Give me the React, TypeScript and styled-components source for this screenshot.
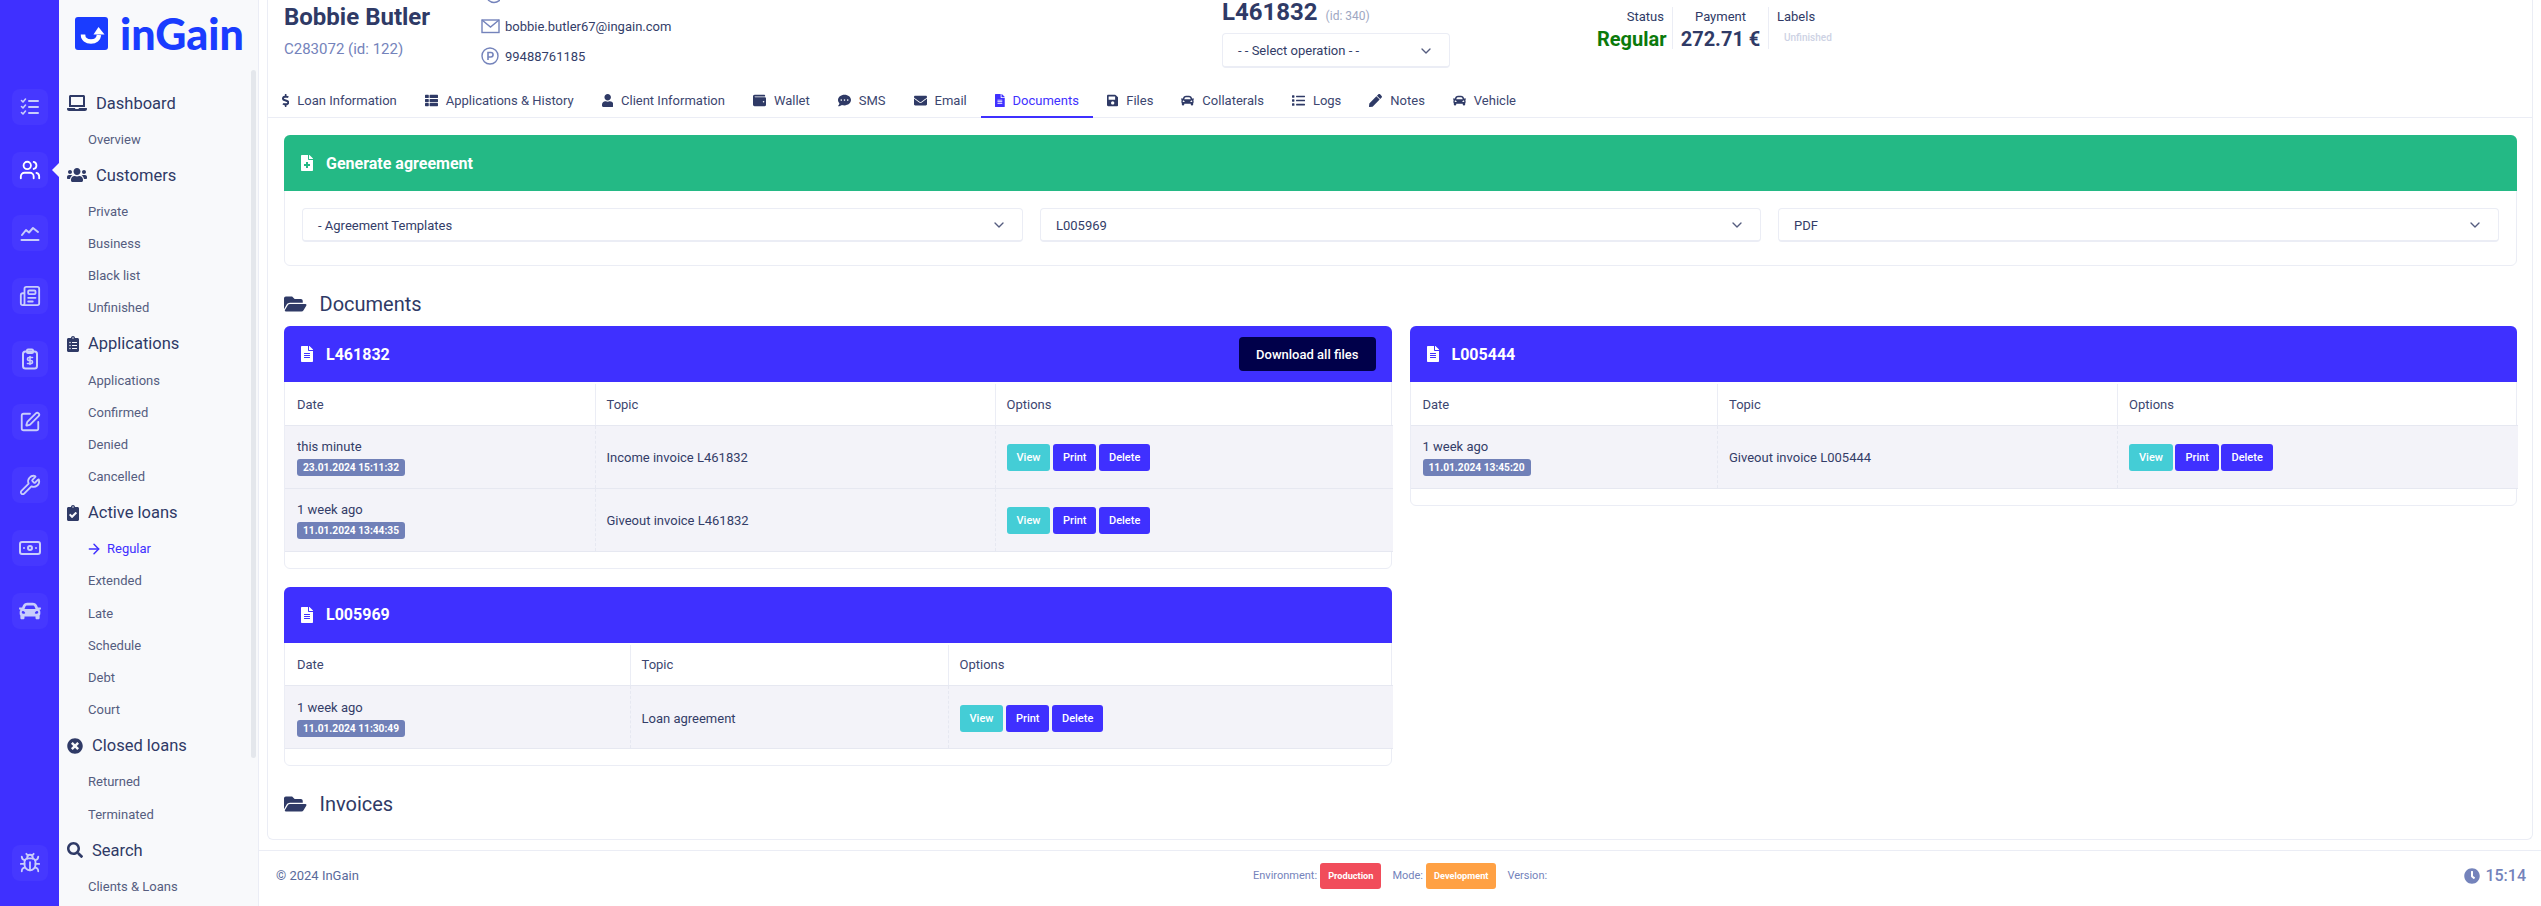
import * as React from "react";
import styled, { createGlobalStyle } from "styled-components";
import { ArrowRight, Banknote, Bug, ChevronDown, Newspaper, SquarePen, Users, Wrench } from "lucide-react";
import {
  FaCar, FaClipboardCheck, FaClipboardList, FaClock, FaCommentDots, FaDollarSign, FaEnvelope, FaFileAlt,
  FaFileMedical, FaFolderOpen, FaLaptop, FaList, FaPen, FaSave, FaSearch, FaThList, FaTimesCircle, FaUser,
  FaUsers, FaWallet,
} from "react-icons/fa";

const GlobalStyle = createGlobalStyle`
  html, body { margin: 0; padding: 0; height: 100%; overflow: hidden; background: #fff; }
  body { font-family: Roboto, "Liberation Sans", sans-serif; color: #2f3a66; }
  * { box-sizing: border-box; }
`;

const Shell = styled.div`
  display: grid;
  grid-template-columns: 59px 200px 1fr;
  height: 906px;
  overflow: hidden;
`;

const Rail = styled.aside`
  background: #3f30ff;
  display: flex;
  flex-direction: column;
  align-items: center;
  gap: 27px;
  padding: 89px 0 25px;
`;

const RailTile = styled.div<{ $active?: boolean }>`
  position: relative;
  width: 36px;
  height: 36px;
  flex: none;
  border-radius: 8px;
  background: rgba(255, 255, 255, 0.04);
  color: ${(p) => (p.$active ? "#fff" : "#c9cdfb")};
  display: flex;
  align-items: center;
  justify-content: center;
  &:last-child { margin-top: auto; }
  ${(p) =>
    p.$active &&
    `&::after {
      content: "";
      position: absolute;
      right: -12px;
      top: 10px;
      border-style: solid;
      border-width: 8px 8px 8px 0;
      border-color: transparent #f8f9fb transparent transparent;
    }`}
`;

const Sidebar = styled.nav`
  position: relative;
  background: #f8f9fb;
  border-right: 1px solid #ebedf5;
  overflow: hidden;
`;

const Logo = styled.div`
  height: 83px;
  padding: 17px 0 0 16px;
  display: flex;
  align-items: flex-start;
  gap: 12px;
`;

const LogoMark = styled.svg`
  width: 33px;
  height: 33px;
  flex: none;
`;

const LogoWord = styled.span`
  font-family: Lato, sans-serif;
  font-weight: 900;
  font-size: 43px;
  line-height: 33px;
  color: #1a3cff;
`;

const SideScroll = styled.div`
  position: absolute;
  left: 192px;
  top: 70px;
  width: 5px;
  height: 688px;
  border-radius: 3px;
  background: #e4e7ec;
`;

/* react-icons fixes width to 1em, so the natural ratio of each glyph goes here */
const Ico = styled.span<{ $w: number }>`
  display: inline-flex;
  flex: none;
  width: ${(p) => p.$w}em;
  height: 1em;
  svg { width: 100%; height: 100%; display: block; }
`;

const NavHead = styled.div`
  height: 40px;
  padding-left: 8px;
  display: flex;
  align-items: center;
  gap: 9px;
  font-size: 16.5px;
  color: #2f3a66;
  ${Ico} { font-size: 16px; }
`;

const NavItem = styled.div<{ $active?: boolean }>`
  height: 32.2px;
  padding-left: 29px;
  display: flex;
  align-items: center;
  gap: 5px;
  font-size: 13px;
  color: ${(p) => (p.$active ? "#3f30ff" : "#555d7f")};
  svg { margin-left: -2px; }
`;

const Main = styled.main`
  min-width: 0;
  display: flex;
  flex-direction: column;
`;

const Frame = styled.div`
  height: 840px;
  margin: 0 8px 10px;
  border: 1px solid #ebedf5;
  border-top: 0;
  border-radius: 0 0 6px 6px;
  overflow: hidden;
`;

const Header = styled.header`
  height: 82px;
  padding-left: 16px;
  display: grid;
  grid-template-columns: 197px 741px 375px 1fr;
  overflow: hidden;
`;

const NameBlock = styled.div`
  padding-top: 3px;
`;

const ClientName = styled.h1`
  margin: 0 0 8px;
  font-size: 24px;
  line-height: 28px;
  font-weight: 700;
  color: #2f3a66;
`;

const ClientId = styled.div`
  font-size: 15px;
  line-height: 20px;
  color: #7483bb;
`;

const Contacts = styled.div`
  height: 82px;
  padding-bottom: 17px;
  display: flex;
  flex-direction: column;
  justify-content: flex-end;
  gap: 12px;
`;

const ContactRow = styled.div`
  height: 18px;
  flex: none;
  display: flex;
  align-items: center;
  gap: 5px;
  font-size: 13px;
  color: #333d68;
  svg { width: 19px; height: 18px; flex: none; }
`;

const LoanBlock = styled.div`
  width: 228px;
`;

const LoanTitle = styled.div`
  height: 33px;
  display: flex;
  gap: 8px;
  align-items: baseline;
  font-size: 24px;
  line-height: 24px;
  font-weight: 700;
  color: #2f3a66;
  small { font-size: 12px; font-weight: 400; color: #9ea7c2; }
`;

const SelectBox = styled.div<{ $tall?: boolean }>`
  height: ${(p) => (p.$tall ? "35px" : "34px")};
  flex: 1;
  padding: 1px 15px 0;
  border: 1px solid #ebedf5;
  border-bottom-width: 2px;
  border-radius: 4px;
  background: #fff;
  display: flex;
  align-items: center;
  justify-content: space-between;
  font-size: 13px;
  color: #333d68;
  svg { color: #555d7f; flex: none; }
`;

const StatusRow = styled.div`
  display: flex;
  padding-top: 7px;
  align-items: flex-start;
`;

const StatusCell = styled.div<{ $width: number; $align: string }>`
  width: ${(p) => p.$width}px;
  height: 42px;
  padding: 0 ${(p) => (p.$align === "center" ? "0" : "8px")} 0 ${(p) => (p.$align === "left" ? "8px" : "0")};
  border-right: 1px solid ${(p) => (p.$align === "left" ? "transparent" : "#ebedf5")};
  text-align: ${(p) => p.$align};
`;

const StatusLabel = styled.div`
  font-size: 13px;
  line-height: 20px;
  color: #2f3a66;
`;

const StatusValue = styled.div<{ $color: string }>`
  font-size: 20px;
  line-height: 24px;
  font-weight: 700;
  color: ${(p) => p.$color};
`;

const LabelTag = styled.div`
  margin: 5px 0 0 7px;
  font-size: 10px;
  font-weight: 500;
  color: #cdd2e4;
`;

const Tabs = styled.div`
  height: 36px;
  display: flex;
  border-bottom: 1px solid #ebedf5;
`;

const Tab = styled.div<{ $active?: boolean }>`
  height: 36px;
  padding: 2px 14px 0;
  display: flex;
  align-items: center;
  gap: 8px;
  font-size: 13px;
  color: ${(p) => (p.$active ? "#3f30ff" : "#3c4670")};
  border-bottom: 2px solid ${(p) => (p.$active ? "#3f30ff" : "transparent")};
  ${Ico} { color: ${(p) => (p.$active ? "#3f30ff" : "#2f3a66")}; }
`;

const Content = styled.div`
  padding: 17px 15px 0 16px;
`;

const Card = styled.section`
  border: 1px solid #ebedf5;
  border-radius: 6px;
  background: #fff;
  min-width: 0;
`;

const CardHeader = styled.div<{ $color: string }>`
  height: 56px;
  margin: -1px -1px 0;
  padding: 0 16px 0 17px;
  border-radius: 6px 6px 0 0;
  background: ${(p) => p.$color};
  color: #fff;
  display: flex;
  align-items: center;
  gap: 13px;
  font-size: 16px;
  font-weight: 700;
`;

const DownloadButton = styled.button`
  margin-left: auto;
  height: 34px;
  padding: 0 17px;
  border: 0;
  border-radius: 4px;
  background: #00004a;
  color: #fff;
  font: 500 13px Roboto, sans-serif;
`;

const SelectRow = styled.div`
  display: flex;
  gap: 17px;
  padding: 17px 17px 23px;
`;

const SectionTitle = styled.h2`
  height: 28px;
  margin: 24px 0 8px;
  display: flex;
  align-items: center;
  gap: 13px;
  font-size: 20px;
  font-weight: 400;
  color: #2f3a66;
`;

const DocGrid = styled.div`
  display: grid;
  grid-template-columns: minmax(0, 1fr) minmax(0, 1fr);
  gap: 18px;
  align-items: start;
`;

const LeftStack = styled.div`
  display: flex;
  flex-direction: column;
  gap: 18px;
  min-width: 0;
`;

const DocTable = styled.table`
  width: 100%;
  table-layout: fixed;
  border-collapse: collapse;
  margin: 2px 0 16px;
  font-size: 13px;
  color: #333d68;
  th {
    height: 41px;
    padding: 0 11px;
    text-align: left;
    font-weight: 400;
    color: #3c4670;
    border-left: 1px solid #ebedf5;
    border-bottom: 1px solid #e6e8f1;
  }
  th:first-child, td:first-child { border-left: 0; padding-left: 12px; }
  td {
    height: 63px;
    padding: 2px 11px 0;
    background: #f3f3f9;
    border-left: 1px dashed #e6e8f1;
    border-bottom: 1px solid #e6e8f1;
  }
`;

const Badge = styled.span`
  display: block;
  width: fit-content;
  margin-top: 5px;
  padding: 0 6px;
  height: 17px;
  line-height: 17px;
  border-radius: 3px;
  background: #7080b8;
  color: #fff;
  font-size: 10.2px;
  font-weight: 700;
`;

const ActionRow = styled.div`
  display: flex;
  gap: 2.5px;
`;

const ActionButton = styled.button<{ $color: string }>`
  height: 27px;
  padding: 0 10px;
  border: 0;
  border-radius: 3px;
  background: ${(p) => p.$color};
  color: #fff;
  font: 500 11px Roboto, sans-serif;
`;

const Footer = styled.footer`
  height: 56px;
  padding: 0 15px 6px 17px;
  border-top: 1px solid #ebedf5;
  display: grid;
  grid-template-columns: 977px 1fr auto;
  align-items: center;
  font-size: 13px;
  color: #5a6a9b;
`;

const FooterMeta = styled.div`
  display: flex;
  align-items: center;
  gap: 3px;
  font-size: 11px;
  color: #7483bb;
`;

const EnvBadge = styled.b<{ $color: string }>`
  height: 26px;
  padding: 0 8px;
  margin-right: 8px;
  border-radius: 3px;
  background: ${(p) => p.$color};
  color: #fff;
  font-size: 9.2px;
  font-weight: 700;
  display: flex;
  align-items: center;
`;

const Clock = styled.div`
  display: flex;
  align-items: center;
  gap: 5px;
  font-size: 16px;
  font-weight: 500;
  color: #7483bb;
`;

const ChecksIcon = () => (
  <svg width="20" height="20" viewBox="0 0 20 20" fill="none" stroke="currentColor" strokeWidth="2" strokeLinecap="round" strokeLinejoin="round">
    <path d="M1.5 3.5l1.5 1.5 2.5-3M1.5 9.5l1.5 1.5 2.5-3M1.5 15.5l1.5 1.5 2.5-3" strokeWidth="1.6" />
    <path d="M9 4h9M9 10h9M9 16h9" />
  </svg>
);

const ChartIcon = () => (
  <svg width="20" height="20" viewBox="0 0 20 20" fill="none" stroke="currentColor" strokeWidth="2" strokeLinecap="round" strokeLinejoin="round">
    <path d="M2 12l4-5 3 2.5L13 5l5 4" />
    <path d="M1.5 17h17" />
  </svg>
);

const ClipDollarIcon = () => (
  <svg width="22" height="22" viewBox="0 0 22 22" fill="none" stroke="currentColor" strokeWidth="2" strokeLinecap="round" strokeLinejoin="round">
    <rect x="4" y="3.5" width="14" height="17" rx="2.5" />
    <rect x="8" y="1.5" width="6" height="3.5" rx="1" />
    <path d="M13.5 9.5H10a1.5 1.5 0 0 0 0 3h2a1.5 1.5 0 0 1 0 3H8.5M11 8.5v8" strokeWidth="1.6" />
  </svg>
);

const railIcons = [
  <ChecksIcon />,
  <Users size={22} />,
  <ChartIcon />,
  <Newspaper size={22} />,
  <ClipDollarIcon />,
  <SquarePen size={22} />,
  <Wrench size={22} />,
  <Banknote size={24} />,
  <FaCar size={22} />,
];

const menu: { title: string; icon: React.ReactNode; w: number; items: string[] }[] = [
  { title: "Dashboard", icon: <FaLaptop />, w: 1.25, items: ["Overview"] },
  { title: "Customers", icon: <FaUsers />, w: 1.25, items: ["Private", "Business", "Black list", "Unfinished"] },
  { title: "Applications", icon: <FaClipboardList />, w: 0.75, items: ["Applications", "Confirmed", "Denied", "Cancelled"] },
  { title: "Active loans", icon: <FaClipboardCheck />, w: 0.75, items: ["Regular", "Extended", "Late", "Schedule", "Debt", "Court"] },
  { title: "Closed loans", icon: <FaTimesCircle />, w: 1, items: ["Returned", "Terminated"] },
  { title: "Search", icon: <FaSearch />, w: 1, items: ["Clients & Loans"] },
];

const tabs: [string, React.ReactNode, number][] = [
  ["Loan Information", <FaDollarSign />, 0.5625],
  ["Applications & History", <FaThList />, 1],
  ["Client Information", <FaUser />, 0.875],
  ["Wallet", <FaWallet />, 1],
  ["SMS", <FaCommentDots />, 1],
  ["Email", <FaEnvelope />, 1],
  ["Documents", <FaFileAlt />, 0.75],
  ["Files", <FaSave />, 0.875],
  ["Collaterals", <FaCar />, 1],
  ["Logs", <FaList />, 1],
  ["Notes", <FaPen />, 1],
  ["Vehicle", <FaCar />, 1],
];

interface DocRow {
  ago: string;
  stamp: string;
  topic: string;
}

const DocCard = ({ title, cols, rows, download }: { title: string; cols: number[]; rows: DocRow[]; download?: boolean }) => (
  <Card>
    <CardHeader $color="#3f30ff">
      <Ico $w={0.75}>
        <FaFileAlt />
      </Ico>
      {title}
      {download && <DownloadButton>Download all files</DownloadButton>}
    </CardHeader>
    <DocTable>
      <colgroup>
        {cols.map((c) => (
          <col key={c} width={c} />
        ))}
      </colgroup>
      <thead>
        <tr>
          <th>Date</th>
          <th>Topic</th>
          <th>Options</th>
        </tr>
      </thead>
      <tbody>
        {rows.map((r) => (
          <tr key={r.stamp}>
            <td>
              {r.ago}
              <Badge>{r.stamp}</Badge>
            </td>
            <td>{r.topic}</td>
            <td>
              <ActionRow>
                <ActionButton $color="#44cdd6">View</ActionButton>
                <ActionButton $color="#3f30ff">Print</ActionButton>
                <ActionButton $color="#3f30ff">Delete</ActionButton>
              </ActionRow>
            </td>
          </tr>
        ))}
      </tbody>
    </DocTable>
  </Card>
);

export default function App() {
  return (
    <Shell>
      <GlobalStyle />
      <Rail>
        {railIcons.map((icon, i) => (
          <RailTile key={i} $active={i === 1}>
            {icon}
          </RailTile>
        ))}
        <RailTile>
          <Bug size={22} />
        </RailTile>
      </Rail>

      <Sidebar>
        <Logo>
          <LogoMark viewBox="0 0 33 33">
            <rect width="33" height="33" rx="3" fill="#1a3cff" />
            <path d="M8 17.5c0 4.5 3.5 7 8 7s7.5-2.5 8-6.5" fill="none" stroke="#fff" strokeWidth="4.5" />
            <path d="M23.5 10l6 7.5h-11z" fill="#fff" />
          </LogoMark>
          <LogoWord>inGain</LogoWord>
        </Logo>
        {menu.map((group) => (
          <React.Fragment key={group.title}>
            <NavHead>
              <Ico $w={group.w}>{group.icon}</Ico>
              {group.title}
            </NavHead>
            {group.items.map((item) => (
              <NavItem key={item} $active={item === "Regular"}>
                {item === "Regular" && <ArrowRight size={16} strokeWidth={2.2} />}
                {item}
              </NavItem>
            ))}
          </React.Fragment>
        ))}
        <SideScroll />
      </Sidebar>

      <Main>
        <Frame>
          <Header>
            <NameBlock>
              <ClientName>Bobbie Butler</ClientName>
              <ClientId>C283072 (id: 122)</ClientId>
            </NameBlock>
            <Contacts>
              <ContactRow>
                <svg viewBox="0 0 19 18" fill="none" stroke="#7483bb" strokeWidth="1.4">
                  <path d="M7 13q6 5 12 0" />
                </svg>
              </ContactRow>
              <ContactRow>
                <svg viewBox="0 0 19 18" fill="none" stroke="#7483bb" strokeWidth="1.4">
                  <rect x="1" y="3" width="17" height="12.5" />
                  <path d="M1 3l8.5 7L18 3" />
                </svg>
                bobbie.butler67@ingain.com
              </ContactRow>
              <ContactRow>
                <svg viewBox="0 0 19 18" fill="none" stroke="#7483bb" strokeWidth="1.4">
                  <circle cx="9" cy="9" r="8" />
                  <path d="M7 13V5.5h2.8a2.2 2.2 0 0 1 0 4.500H7" strokeWidth="1.6" />
                </svg>
                99488761185
              </ContactRow>
            </Contacts>
            <LoanBlock>
              <LoanTitle>
                L461832 <small>(id: 340)</small>
              </LoanTitle>
              <SelectBox $tall>
                - - Select operation - -
                <ChevronDown size={16} />
              </SelectBox>
            </LoanBlock>
            <StatusRow>
              <StatusCell $width={76} $align="right">
                <StatusLabel>Status</StatusLabel>
                <StatusValue $color="#0b7a0b">Regular</StatusValue>
              </StatusCell>
              <StatusCell $width={96} $align="center">
                <StatusLabel>Payment</StatusLabel>
                <StatusValue $color="#2f3a66">272.71 €</StatusValue>
              </StatusCell>
              <StatusCell $width={80} $align="left">
                <StatusLabel>Labels</StatusLabel>
                <LabelTag>Unfinished</LabelTag>
              </StatusCell>
            </StatusRow>
          </Header>

          <Tabs>
            {tabs.map(([label, icon, w]) => (
              <Tab key={label} $active={label === "Documents"}>
                <Ico $w={w}>{icon}</Ico>
                {label}
              </Tab>
            ))}
          </Tabs>

          <Content>
            <Card>
              <CardHeader $color="#24b985">
                <Ico $w={0.75}>
                  <FaFileMedical />
                </Ico>
                Generate agreement
              </CardHeader>
              <SelectRow>
                {["- Agreement Templates", "L005969", "PDF"].map((v) => (
                  <SelectBox key={v}>
                    {v}
                    <ChevronDown size={16} />
                  </SelectBox>
                ))}
              </SelectRow>
            </Card>

            <SectionTitle>
              <Ico $w={1.125}>
                <FaFolderOpen />
              </Ico>
              Documents
            </SectionTitle>
            <DocGrid>
              <LeftStack>
                <DocCard
                  title="L461832"
                  download
                  cols={[310, 400, 398]}
                  rows={[
                    { ago: "this minute", stamp: "23.01.2024 15:11:32", topic: "Income invoice L461832" },
                    { ago: "1 week ago", stamp: "11.01.2024 13:44:35", topic: "Giveout invoice L461832" },
                  ]}
                />
                <DocCard
                  title="L005969"
                  cols={[345, 318, 445]}
                  rows={[{ ago: "1 week ago", stamp: "11.01.2024 11:30:49", topic: "Loan agreement" }]}
                />
              </LeftStack>
              <DocCard
                title="L005444"
                cols={[307, 400, 400]}
                rows={[{ ago: "1 week ago", stamp: "11.01.2024 13:45:20", topic: "Giveout invoice L005444" }]}
              />
            </DocGrid>

            <SectionTitle>
              <Ico $w={1.125}>
                <FaFolderOpen />
              </Ico>
              Invoices
            </SectionTitle>
          </Content>
        </Frame>

        <Footer>
          <div>© 2024 InGain</div>
          <FooterMeta>
            Environment:
            <EnvBadge $color="#f14d5b">Production</EnvBadge>
            Mode:
            <EnvBadge $color="#ffa144">Development</EnvBadge>
            Version:
          </FooterMeta>
          <Clock>
            <FaClock />
            15:14
          </Clock>
        </Footer>
      </Main>
    </Shell>
  );
}
